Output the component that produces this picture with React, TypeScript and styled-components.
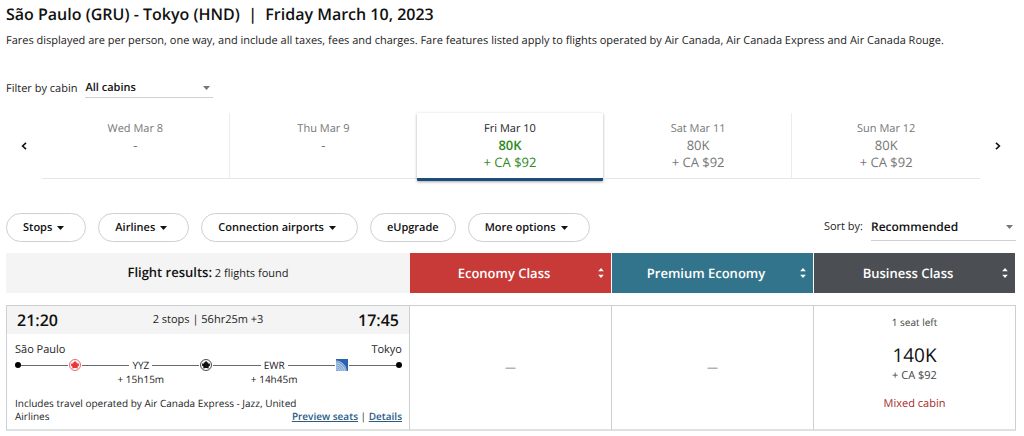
import React from "react";
import styled, { createGlobalStyle } from "styled-components";

const GlobalStyle = createGlobalStyle`
  *, *::before, *::after { box-sizing: border-box; }
  body {
    margin: 0;
    background: #fff;
    color: #1c1c1c;
    font-family: "Open Sans", "Noto Sans", sans-serif;
    font-size: 11px;
    line-height: 16px;
    text-rendering: geometricPrecision;
  }
  button, select { font: inherit; color: inherit; text-rendering: inherit; }
`;

const Page = styled.main`
  padding: 2px 8px 0 6px;
`;

const Title = styled.h1`
  margin: 0;
  font-size: 16px;
  line-height: 24px;
  font-weight: 600;
  color: #111;
  white-space: pre-wrap;
`;

const Intro = styled.p`
  margin: 7px 0 0;
`;

const CabinFilter = styled.div`
  display: flex;
  align-items: center;
  gap: 8px;
  margin-top: 30px;
`;

const SelectBox = styled.div<{ $width: number }>`
  display: grid;
  align-items: center;
  width: ${(p) => p.$width}px;
  border-bottom: 1px solid #d0d0d0;

  > * { grid-area: 1 / 1; }
  > svg { justify-self: end; margin-right: 3px; pointer-events: none; }
`;

const Select = styled.select<{ $tall?: boolean }>`
  appearance: none;
  width: 100%;
  height: ${(p) => (p.$tall ? 27 : 18)}px;
  padding: 0;
  border: 0;
  background: transparent;
  font-size: ${(p) => (p.$tall ? 12 : 11)}px;
  font-weight: 600;
  color: #111;
`;

const DateBar = styled.nav`
  display: flex;
  align-items: flex-start;
  margin-top: 15px;
`;

const ArrowButton = styled.button`
  display: flex;
  align-items: center;
  justify-content: center;
  width: 36px;
  height: 66px;
  padding: 0;
  border: 0;
  background: none;
`;

const DateList = styled.div`
  flex: 1;
  display: grid;
  grid-template-columns: repeat(5, 1fr);
  align-items: start;
`;

const DateTab = styled.button<{ $active?: boolean; $divider?: boolean }>`
  display: flex;
  flex-direction: column;
  align-items: center;
  height: ${(p) => (p.$active ? 68 : 66)}px;
  margin-right: ${(p) => (p.$active ? 2 : 0)}px;
  padding: 8px 0 0;
  border: 0;
  border-right: ${(p) => (p.$divider ? "1px solid #ececec" : "0")};
  border-bottom: ${(p) => (p.$active ? "3px solid #1c4d79" : "1px solid #e6e6e6")};
  border-radius: ${(p) => (p.$active ? "1px" : "0")};
  background: #fff;
  color: ${(p) => (p.$active ? "#1c1c1c" : "#767676")};
  box-shadow: ${(p) => (p.$active ? "0 1px 3px rgba(0, 0, 0, 0.35)" : "none")};
`;

const DatePrice = styled.span<{ $active?: boolean; $bold?: boolean }>`
  font-size: 13px;
  line-height: 17px;
  color: ${(p) => (p.$active ? "#2f8a1b" : "inherit")};
  font-weight: ${(p) => (p.$bold ? 600 : 400)};
`;

const Toolbar = styled.div`
  display: flex;
  justify-content: space-between;
  align-items: flex-start;
  margin-top: 32px;
`;

const Pills = styled.div`
  display: flex;
  gap: 12px;
`;

const Pill = styled.button`
  display: flex;
  align-items: center;
  height: 29px;
  padding: 0 16px;
  border: 1px solid #ccd0d0;
  border-radius: 15px;
  background: #fff;
  font-weight: 600;
  color: #111;

  > svg { margin: 0 5px; }
`;

const Sort = styled.div`
  display: flex;
  align-items: center;
  gap: 8px;
`;

const Results = styled.table`
  width: 100%;
  margin-top: 11px;
  table-layout: fixed;
  border-collapse: separate;
  border-spacing: 0;

  th, td { padding: 0; }
  tbody::before { content: ""; display: block; height: 12px; }
`;

const FlightColumn = styled.col`
  width: 40%;
`;

const ResultsHead = styled.th`
  height: 40px;
  background: #f4f4f4;
  font-weight: 400;
  text-align: center;

  strong { font-size: 13px; font-weight: 600; color: #111; }
`;

const CabinHead = styled.th<{ $color: string }>`
  height: 40px;
  border-right: 1px solid #fff;
  background: ${(p) => p.$color};
  background-clip: padding-box;
`;

const CabinButton = styled.button`
  display: flex;
  align-items: center;
  width: 100%;
  height: 40px;
  padding: 0 7px 0 0;
  border: 0;
  background: none;
  color: #fff;
  font-size: 13px;
  font-weight: 600;

  span { flex: 1; text-align: center; }
`;

const Cell = styled.td`
  border: solid #ccd0d0;
  border-width: 1px 1px 2px 0;
  border-bottom-color: #e0e2e2;
  text-align: center;
  vertical-align: middle;

  &:first-child { border-left-width: 1px; text-align: left; vertical-align: top; }
`;

const Unavailable = styled.span`
  color: #777;
`;

const Times = styled.div`
  display: flex;
  justify-content: space-between;
  align-items: center;
  height: 28px;
  padding: 0 10px;
  background: #f4f4f4;
`;

const Time = styled.time`
  font-size: 16px;
  font-weight: 600;
  color: #111;
`;

const Details = styled.div`
  padding: 8px 7px 6px 8px;
`;

const Cities = styled.div`
  display: flex;
  justify-content: space-between;
`;

const Route = styled.div`
  display: grid;
  grid-template-columns: auto 1fr auto 1fr auto 1fr auto 1fr auto 1fr auto 1fr auto;
  align-items: center;

  > svg { margin: 0 1px; }
`;

const Dot = styled.span`
  width: 6px;
  height: 6px;
  border-radius: 50%;
  background: #000;
`;

const Leg = styled.span`
  height: 1px;
  background: #6a6a6a;
`;

const Airport = styled.span`
  padding: 0 3px;
  font-size: 10px;
  line-height: 14px;
`;

const Layover = styled.span<{ $from: number }>`
  grid-row: 2;
  grid-column: ${(p) => p.$from} / span 3;
  text-align: center;
  font-size: 10px;
  line-height: 14px;
`;

/* The links share the last line of the note, so both sit in one grid cell. */
const Footer = styled.div`
  display: grid;
  margin-top: 11px;
  font-size: 10px;
  line-height: 13px;

  > * { grid-area: 1 / 1; }
`;

const Operators = styled.span`
  width: 75%;
`;

const Links = styled.span`
  justify-self: end;
  align-self: end;
  white-space: nowrap;
`;

const Link = styled.a`
  font-weight: 600;
  color: #2b5c84;
  text-decoration: underline;
`;

const Fare = styled.button`
  display: flex;
  flex-direction: column;
  align-items: center;
  width: 100%;
  padding: 0 0 9px;
  border: 0;
  background: none;
`;

const SeatsLeft = styled.span`
  font-size: 10px;
  line-height: 14px;
  font-weight: 500;
  color: #444;
`;

const Points = styled.span`
  margin-top: 13px;
  font-size: 19px;
  line-height: 26px;
  color: #111;
`;

const Cash = styled.span`
  color: #444;
`;

const Mixed = styled.span`
  margin-top: 12px;
  color: #a5281f;
`;

const Caret = ({ color = "#111" }: { color?: string }) => (
  <svg width="7" height="4" viewBox="0 0 7 4" aria-hidden="true">
    <path d="M0 0h7L3.5 4z" fill={color} />
  </svg>
);

const Chevron = ({ right }: { right?: boolean }) => (
  <svg width="6" height="8" viewBox="0 0 6 8" fill="none" stroke="#111" strokeWidth="1.6" aria-hidden="true">
    <path d={right ? "M1 .8L4.4 4 1 7.2" : "M5 .8L1.6 4 5 7.2"} />
  </svg>
);

const SortArrows = () => (
  <svg width="6" height="10" viewBox="0 0 6 10" fill="#fff" aria-hidden="true">
    <path d="M3 0l2.8 3.2H.2zM3 10l2.8-3.2H.2z" />
  </svg>
);

const MapleLogo = ({ color }: { color: string }) => (
  <svg width="12" height="12" viewBox="0 0 24 24" role="img" aria-label="Air Canada">
    <circle cx="12" cy="12" r="11" fill="none" stroke={color} strokeWidth="1.5" />
    <path
      fill={color}
      d="M12 3.600l2.300 3.600 2.200-.6v2.800l4-.2-1 3 .8 1-3.300 2.400.6 3.200-4.800-.8h-1.600l-4.800.8.6-3.200-3.300-2.400.8-1-1-3 4 .2V6.600l2.200.6z"
    />
  </svg>
);

const UnitedLogo = () => (
  <svg width="12" height="12" viewBox="0 0 24 24" role="img" aria-label="United Airlines">
    <rect width="24" height="24" fill="#2a63b0" />
    <path d="M0 5C11 5 19 13 20 24H0z" fill="#7ea3d3" />
    <g fill="none" stroke="#dbe7f5" strokeWidth="1.4">
      <path d="M0 4C11 4.500 19.500 12 20.500 24" />
      <path d="M0 8C9 8.500 16 15 17 24" />
      <path d="M0 12C7 12.500 12.500 17 13.500 24" />
      <path d="M0 16c5 .5 9 3.500 10 8" />
      <path d="M0 20c3 .5 5.500 1.500 6.500 4" />
    </g>
  </svg>
);

const dates = [
  { day: "Wed Mar 8" },
  { day: "Thu Mar 9" },
  { day: "Fri Mar 10", points: "80K", cash: "+ CA $92", active: true },
  { day: "Sat Mar 11", points: "80K", cash: "+ CA $92" },
  { day: "Sun Mar 12", points: "80K", cash: "+ CA $92" },
];

const filters = [
  { label: "Stops", menu: true },
  { label: "Airlines", menu: true },
  { label: "Connection airports", menu: true },
  { label: "eUpgrade", menu: false },
  { label: "More options", menu: true },
];

const cabins = [
  { name: "Economy Class", color: "#c73a38" },
  { name: "Premium Economy", color: "#32748b" },
  { name: "Business Class", color: "#4b4e53" },
];

export default function App() {
  return (
    <>
      <GlobalStyle />
      <Page>
        <Title>{"São Paulo (GRU) - Tokyo (HND)  |  Friday March 10, 2023"}</Title>
        <Intro>
          Fares displayed are per person, one way, and include all taxes, fees and charges. Fare
          features listed apply to flights operated by Air Canada, Air Canada Express and Air Canada
          Rouge.
        </Intro>

        <CabinFilter>
          <label htmlFor="cabin">Filter by cabin</label>
          <SelectBox $width={128}>
            <Select id="cabin">
              <option>All cabins</option>
            </Select>
            <Caret color="#777" />
          </SelectBox>
        </CabinFilter>

        <DateBar aria-label="Departure dates">
          <ArrowButton aria-label="Previous dates">
            <Chevron />
          </ArrowButton>
          <DateList>
            {dates.map((d, i) => (
              <DateTab key={d.day} $active={d.active} $divider={i === 0 || i === 3}>
                <span>{d.day}</span>
                <DatePrice $active={d.active} $bold={d.active}>
                  {d.points ?? "-"}
                </DatePrice>
                {d.cash && <DatePrice $active={d.active}>{d.cash}</DatePrice>}
              </DateTab>
            ))}
          </DateList>
          <ArrowButton aria-label="Next dates">
            <Chevron right />
          </ArrowButton>
        </DateBar>

        <Toolbar>
          <Pills>
            {filters.map((f) => (
              <Pill key={f.label}>
                {f.label}
                {f.menu && <Caret />}
              </Pill>
            ))}
          </Pills>
          <Sort>
            <label htmlFor="sort">Sort by:</label>
            <SelectBox $width={145}>
              <Select id="sort" $tall>
                <option>Recommended</option>
              </Select>
              <Caret color="#777" />
            </SelectBox>
          </Sort>
        </Toolbar>

        <Results>
          <colgroup>
            <FlightColumn />
            <col />
            <col />
            <col />
          </colgroup>
          <thead>
            <tr>
              <ResultsHead scope="col">
                <strong>Flight results:</strong> 2 flights found
              </ResultsHead>
              {cabins.map((c) => (
                <CabinHead key={c.name} scope="col" $color={c.color}>
                  <CabinButton>
                    <span>{c.name}</span>
                    <SortArrows />
                  </CabinButton>
                </CabinHead>
              ))}
            </tr>
          </thead>
          <tbody>
            <tr>
              <Cell>
                <Times>
                  <Time>21:20</Time>
                  <span>2 stops | 56hr25m +3</span>
                  <Time>17:45</Time>
                </Times>
                <Details>
                  <Cities>
                    <span>São Paulo</span>
                    <span>Tokyo</span>
                  </Cities>
                  <Route>
                    <Dot />
                    <Leg />
                    <MapleLogo color="#e5383b" />
                    <Leg />
                    <Airport>YYZ</Airport>
                    <Leg />
                    <MapleLogo color="#111" />
                    <Leg />
                    <Airport>EWR</Airport>
                    <Leg />
                    <UnitedLogo />
                    <Leg />
                    <Dot />
                    <Layover $from={4}>+ 15h15m</Layover>
                    <Layover $from={8}>+ 14h45m</Layover>
                  </Route>
                  <Footer>
                    <Operators>
                      Includes travel operated by Air Canada Express - Jazz, United Airlines
                    </Operators>
                    <Links>
                      <Link href="#seats">Preview seats</Link> | <Link href="#details">Details</Link>
                    </Links>
                  </Footer>
                </Details>
              </Cell>
              <Cell>
                <Unavailable>—</Unavailable>
              </Cell>
              <Cell>
                <Unavailable>—</Unavailable>
              </Cell>
              <Cell>
                <Fare>
                  <SeatsLeft>1 seat left</SeatsLeft>
                  <Points>140K</Points>
                  <Cash>+ CA $92</Cash>
                  <Mixed>Mixed cabin</Mixed>
                </Fare>
              </Cell>
            </tr>
          </tbody>
        </Results>
      </Page>
    </>
  );
}
